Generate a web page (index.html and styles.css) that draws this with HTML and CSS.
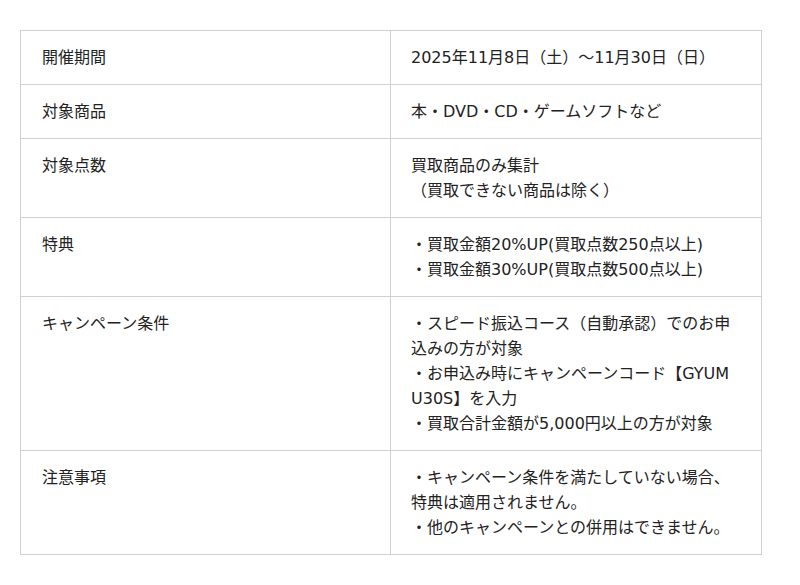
FILE: index.html
```html
<!DOCTYPE html>
<html lang="ja">
<head>
<meta charset="utf-8">
<link rel="stylesheet" href="styles.css">
</head>
<body>
<div class="wrap">
<table class="info">
<tr><th>開催期間</th><td>2025年11月8日（土）〜11月30日（日）</td></tr>
<tr><th>対象商品</th><td>本・DVD・CD・ゲームソフトなど</td></tr>
<tr><th>対象点数</th><td>買取商品のみ集計<br>（買取できない商品は除く）</td></tr>
<tr><th>特典</th><td>・買取金額20%UP(買取点数250点以上)<br>・買取金額30%UP(買取点数500点以上)</td></tr>
<tr><th>キャンペーン条件</th><td>・スピード振込コース（自動承認）でのお申込みの方が対象<br>・お申込み時にキャンペーンコード【GYUMU30S】を入力<br>・買取合計金額が5,000円以上の方が対象</td></tr>
<tr><th>注意事項</th><td>・キャンペーン条件を満たしていない場合、特典は適用されません。<br>・他のキャンペーンとの併用はできません。</td></tr>
</table>
</div>
</body>
</html>
```

FILE: styles.css
```css
html, body {
  margin: 0;
  padding: 0;
  background: #fff;
}
body {
  font-family: "DejaVu Sans", "Noto Sans CJK JP", sans-serif;
  font-size: 16px;
  color: #222;
}
.wrap {
  padding: 30px 20px;
}
.info {
  width: 742px;
  border-collapse: collapse;
  table-layout: fixed;
}
.info th,
.info td {
  border: 1px solid #d0d0d0;
  padding: 14px 22px 14px 20px;
  line-height: 25px;
  text-align: left;
  vertical-align: top;
  font-weight: normal;
}
.info th {
  width: 326px;
  padding-left: 21px;
}
.info td {
  word-break: break-all;
}
```
